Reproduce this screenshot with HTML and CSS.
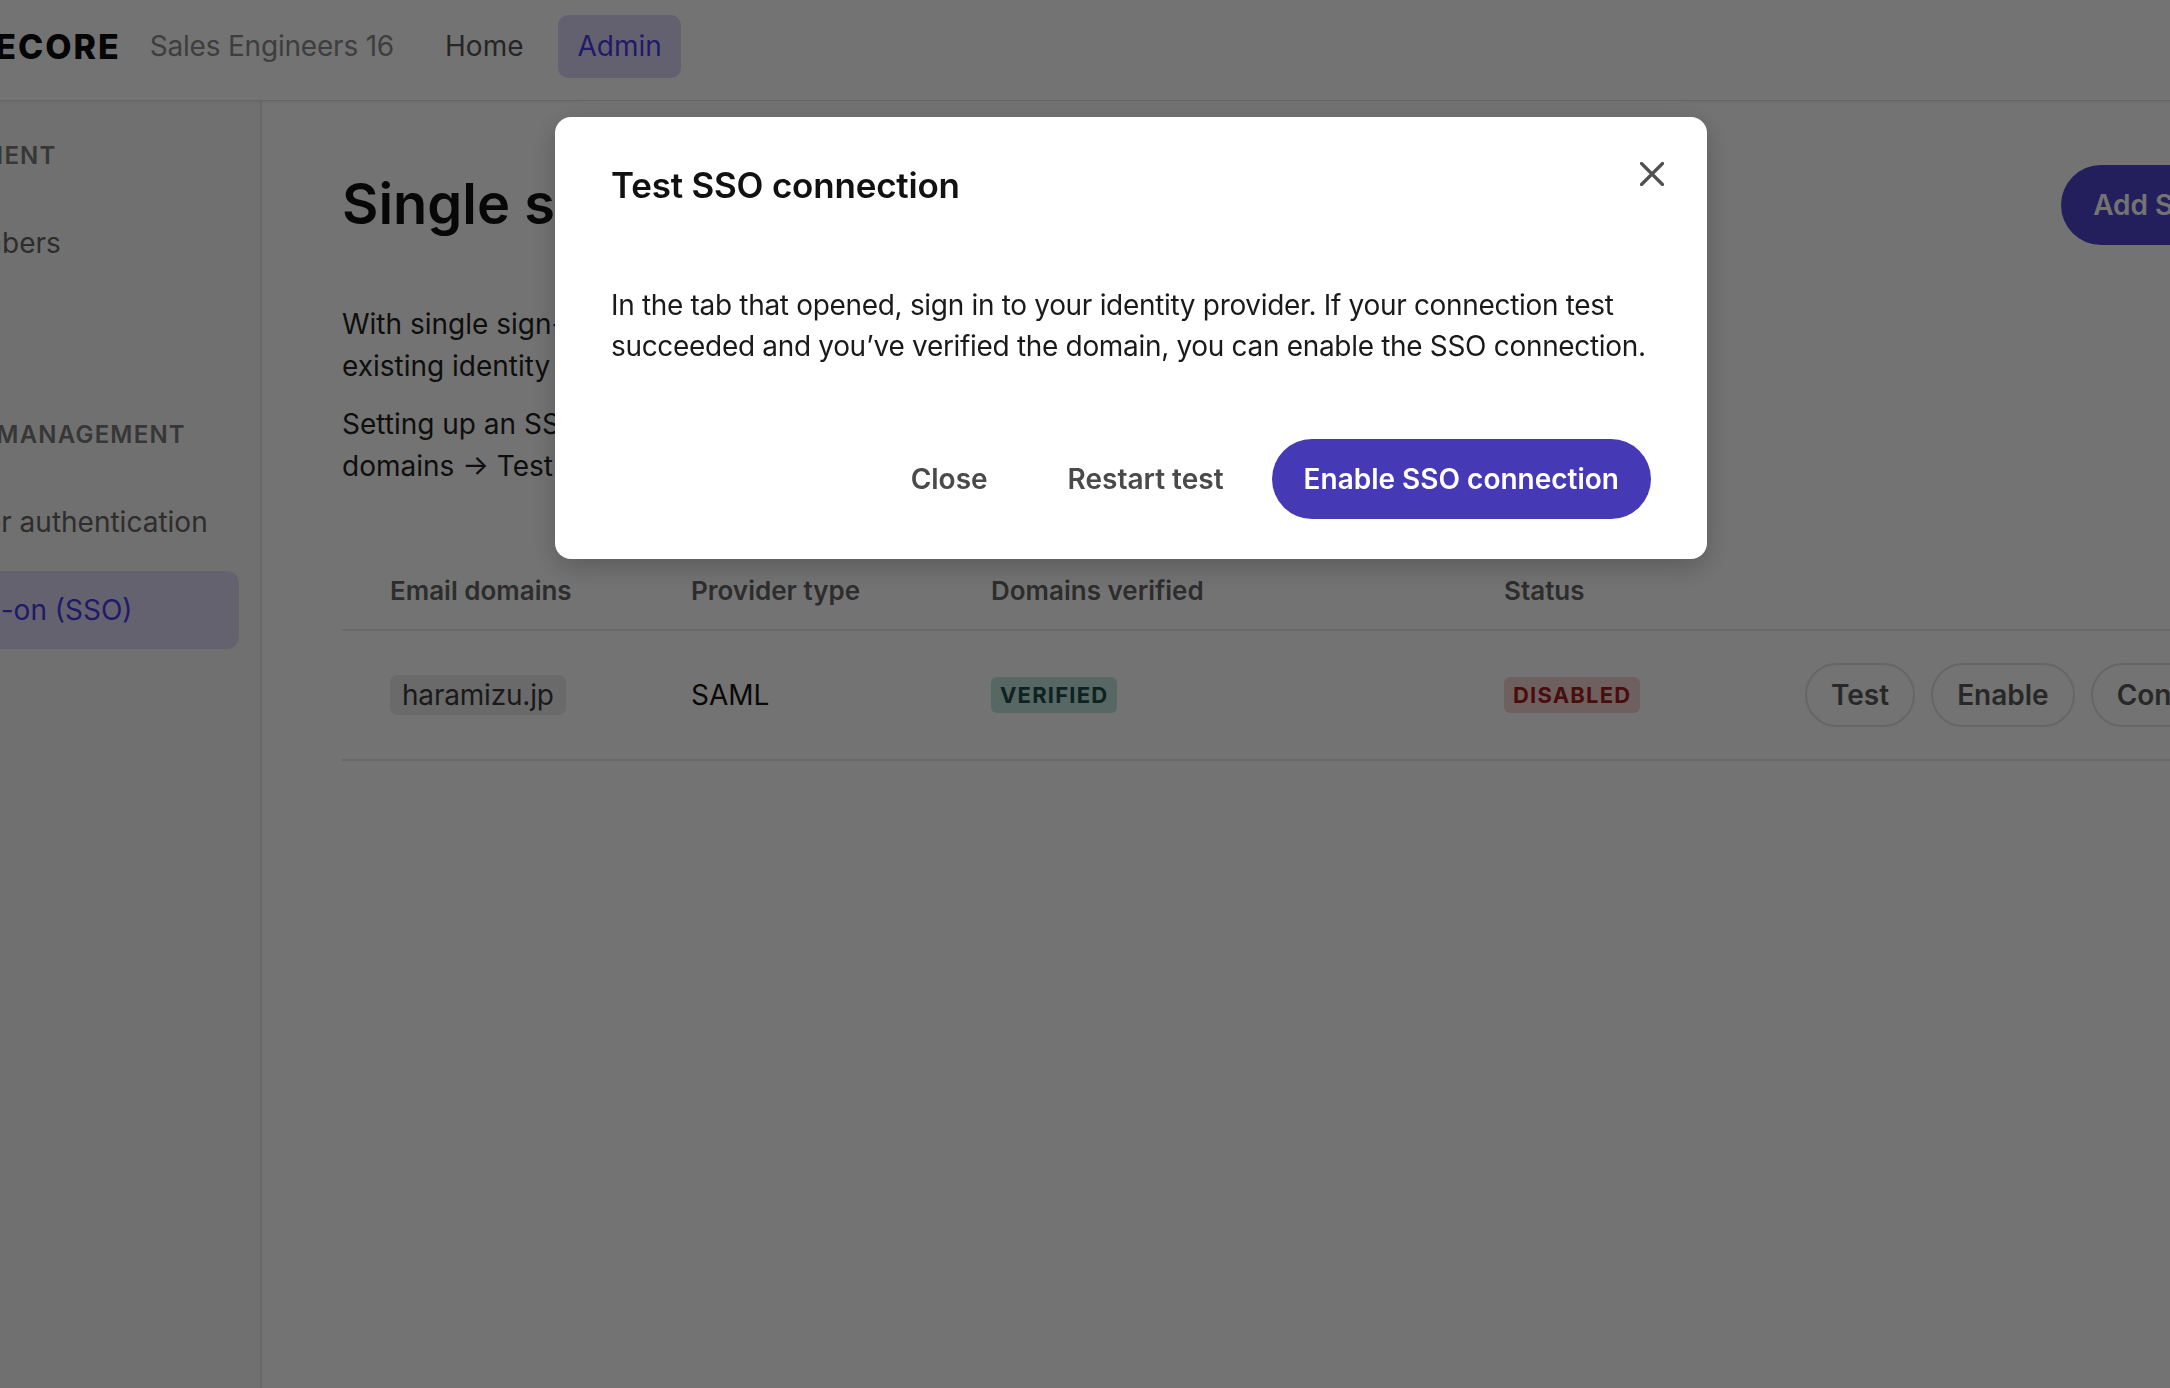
FILE: index.html
```html
<!DOCTYPE html>
<html lang="en">
<head>
<meta charset="utf-8">
<title>Single sign-on (SSO) – Admin</title>
<link rel="stylesheet" href="styles.css">
</head>
<body>
<div class="app">
  <header class="topbar">
    <div class="logo">SITECORE</div>
    <span class="org">Sales Engineers 16</span>
    <nav class="topnav">
      <a class="topnav-item">Home</a>
      <a class="topnav-item active">Admin</a>
    </nav>
  </header>
  <div class="layout">
    <aside class="sidebar">
      <div class="side-section">
        <div class="side-heading">MANAGEMENT</div>
        <a class="side-item">Team members</a>
        <a class="side-item">Teams</a>
      </div>
      <div class="side-section">
        <div class="side-heading">IDENTITY MANAGEMENT</div>
        <a class="side-item">Multi-factor authentication</a>
        <a class="side-item active">Single sign-on (SSO)</a>
      </div>
    </aside>
    <main class="main">
      <div class="title-row">
        <h1 class="page-title">Single sign-on (SSO)</h1>
        <button class="btn btn-primary">Add SSO connection</button>
      </div>
      <p class="intro">With single sign-on (SSO), your team members can log in using your organization's<br>existing identity provider instead of a separate password.</p>
      <p class="intro second">Setting up an SSO connection takes four steps: Add an SSO connection → Verify email<br>domains → Test the connection → Enable the connection.</p>

      <div class="table">
        <div class="tr thead">
          <div class="th">Email domains</div>
          <div class="th">Provider type</div>
          <div class="th">Domains verified</div>
          <div class="th">Status</div>
          <div class="th"></div>
        </div>
        <div class="tr">
          <div class="td"><span class="domain">haramizu.jp</span></div>
          <div class="td">SAML</div>
          <div class="td"><span class="badge badge-ok">VERIFIED</span></div>
          <div class="td"><span class="badge badge-off">DISABLED</span></div>
          <div class="td actions">
            <button class="btn btn-outline">Test</button>
            <button class="btn btn-outline">Enable</button>
            <button class="btn btn-outline">Configure</button>
          </div>
        </div>
      </div>
    </main>
  </div>
</div>

<div class="overlay">
  <div class="modal" role="dialog" aria-labelledby="modal-title">
    <button class="modal-close" aria-label="Close">
      <svg width="24" height="24" viewBox="0 0 24 24" aria-hidden="true">
        <path d="M1.5 1.5 L22.5 22.5 M22.5 1.5 L1.5 22.5" stroke="#505050" stroke-width="3.2" stroke-linecap="round" fill="none"/>
      </svg>
    </button>
    <h2 class="modal-title" id="modal-title">Test SSO connection</h2>
    <p class="modal-text">In the tab that opened, sign in to your identity provider. If your connection test succeeded and you’ve verified the domain, you can enable the SSO connection.</p>
    <div class="modal-actions">
      <button class="btn btn-ghost">Close</button>
      <button class="btn btn-ghost">Restart test</button>
      <button class="btn btn-modal-primary">Enable SSO connection</button>
    </div>
  </div>
</div>
</body>
</html>
```

FILE: styles.css
```css
* {
  box-sizing: border-box;
  margin: 0;
  padding: 0;
}

html, body {
  width: 100%;
  height: 100%;
  overflow: hidden;
}

body {
  font-family: Inter, "Noto Sans", sans-serif;
  color: #1a1a1a;
  background: #ffffff;
}

button {
  font-family: inherit;
  border: none;
  background: none;
  cursor: pointer;
}

a {
  text-decoration: none;
  color: inherit;
}

/* page is horizontally scrolled */
.app {
  width: 2684px;
  margin-left: -200px;
  height: 100vh;
  display: flex;
  flex-direction: column;
}

/* ---------- top bar ---------- */
.topbar {
  height: 101px;
  flex: none;
  display: flex;
  align-items: center;
  padding: 0 0 8px 134px;
  border-bottom: 1px solid #e0e0e0;
  box-shadow: 0 2px 4px rgba(0, 0, 0, 0.05);
  background: #ffffff;
  position: relative;
  z-index: 1;
}

.logo {
  font-size: 34px;
  font-weight: 800;
  letter-spacing: 2px;
  color: #0d0d0d;
}

.org {
  margin-left: 29px;
  font-size: 28px;
  letter-spacing: -0.2px;
  color: #8a8a8a;
}

.topnav {
  margin-left: 32px;
  display: flex;
  gap: 16px;
}

.topnav-item {
  height: 63px;
  padding: 0 19px;
  display: flex;
  align-items: center;
  border-radius: 10px;
  font-size: 28px;
  color: #545454;
}

.topnav-item.active {
  background: #dcd8f6;
  color: #4a3be6;
}

/* ---------- layout ---------- */
.layout {
  flex: 1;
  display: flex;
  min-height: 0;
}

.sidebar {
  width: 462px;
  flex: none;
  padding: 15px 21px 16px 24px;
  background: #f9f9f9;
  border-right: 2px solid #e6e6e6;
}

.side-section + .side-section {
  margin-top: 25px;
}

.side-heading {
  height: 78px;
  display: flex;
  align-items: center;
  padding-left: 43px;
  font-size: 24px;
  font-weight: 600;
  letter-spacing: 1.2px;
  color: #7a7a7a;
  white-space: nowrap;
}

.side-item {
  height: 78px;
  margin-top: 10px;
  display: flex;
  align-items: center;
  padding-left: 32px;
  border-radius: 12px;
  font-size: 28px;
  color: #656565;
  white-space: nowrap;
}

.side-item.active {
  background: #dedaf6;
  color: #4a3be6;
}

/* ---------- main ---------- */
.main {
  flex: 1;
  min-width: 0;
  padding: 64px 80px 0 80px;
}

.title-row {
  height: 80px;
  display: flex;
  align-items: center;
  justify-content: space-between;
}

.page-title {
  font-size: 56px;
  font-weight: 600;
  color: #111111;
  line-height: 1.2;
}

.btn {
  height: 80px;
  padding: 0 32px;
  border-radius: 40px;
  font-size: 28px;
  font-weight: 600;
  white-space: nowrap;
}

.btn-primary {
  background: #4f45cc;
  color: #ffffff;
}

.intro {
  margin-top: 58px;
  font-size: 28px;
  line-height: 42px;
  color: #1f1f1f;
}

.intro.second {
  margin-top: 16px;
}

/* ---------- table ---------- */
.table {
  margin-top: 64px;
}

.tr {
  display: grid;
  grid-template-columns: 301px 300px 513px 301px minmax(0, 1fr);
  border-bottom: 2px solid #e6e6e6;
}

.th,
.td {
  display: flex;
  align-items: center;
  padding-left: 48px;
}

.th {
  height: 78px;
  font-size: 26px;
  font-weight: 600;
  color: #656565;
}

.td {
  height: 128px;
  font-size: 28px;
  color: #121212;
}

.domain {
  height: 40px;
  padding: 0 12px;
  display: inline-flex;
  align-items: center;
  border-radius: 7px;
  background: #ececec;
  color: #3a3a3a;
  font-size: 28px;
  letter-spacing: -0.2px;
}

.badge {
  height: 36px;
  padding: 0 9px;
  display: inline-flex;
  align-items: center;
  border-radius: 6px;
  font-size: 22px;
  font-weight: 700;
  letter-spacing: 1.2px;
}

.badge-ok {
  background: #bfe4de;
  color: #214f48;
}

.badge-off {
  background: #f6d4d4;
  color: #a31e1e;
}

.actions {
  gap: 16px;
}

.btn-outline {
  height: 64px;
  padding: 0 24px;
  border: 2px solid #e2e2e2;
  border-radius: 32px;
  color: #5a5a5a;
  flex: none;
}

/* ---------- modal ---------- */
.overlay {
  position: fixed;
  inset: 0;
  background: rgba(0, 0, 0, 0.55);
  z-index: 10;
}

.modal {
  position: relative;
  width: 1152px;
  margin: 117px 0 0 555px;
  padding: 40px 56px;
  background: #ffffff;
  border-radius: 16px;
  box-shadow: 0 8px 28px rgba(0, 0, 0, 0.22);
}

.modal-close {
  position: absolute;
  top: 29px;
  right: 27px;
  width: 56px;
  height: 56px;
  display: flex;
  align-items: center;
  justify-content: center;
}

.modal-title {
  font-size: 35px;
  font-weight: 600;
  letter-spacing: -0.2px;
  line-height: 56px;
  color: #111111;
}

.modal-text {
  margin-top: 72px;
  font-size: 28px;
  line-height: 41px;
  letter-spacing: -0.32px;
  color: #1a1a1a;
}

.modal-actions {
  margin-top: 72px;
  display: flex;
  justify-content: flex-end;
  gap: 16px;
}

.btn-ghost {
  color: #4a4a4a;
}

.btn-modal-primary {
  background: #4539b6;
  color: #ffffff;
}
```
